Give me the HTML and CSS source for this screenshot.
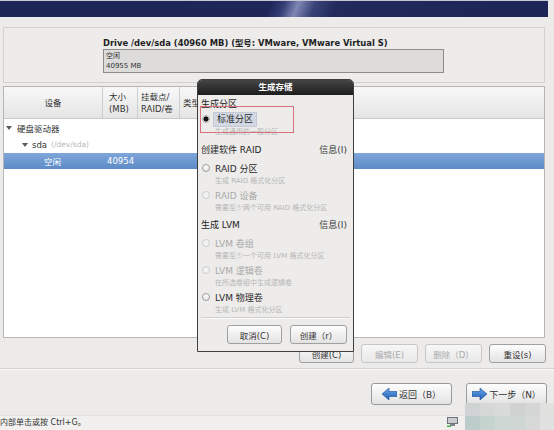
FILE: index.html
```html
<!DOCTYPE html>
<html>
<head>
<meta charset="utf-8">
<link rel="stylesheet" href="styles.css">
</head>
<body>
<div class="screen">
  <div class="banner"></div>
  <div class="main">
    <section class="drive-panel">
      <div class="drive-title">Drive /dev/sda (40960 MB) (型号: VMware, VMware Virtual S)</div>
      <div class="drive-bar"><span>空闲</span><span>40955 MB</span></div>
    </section>
    <section class="tree">
      <div class="tree-head">
        <div class="col c-dev">设备</div>
        <div class="col c-size"><span>大小</span><span>(MB)</span></div>
        <div class="col c-mount"><span>挂载点/</span><span>RAID/卷</span></div>
        <div class="col c-type">类型</div>
      </div>
      <div class="row lvl0"><span class="tri"></span>硬盘驱动器</div>
      <div class="row lvl1"><span class="tri"></span>sda <em class="path">(/dev/sda)</em></div>
      <div class="row sel"><span class="name">空闲</span><span>40954</span></div>
    </section>
    <div class="actions">
      <div class="btn w55">创建(C)</div>
      <div class="btn w57 disabled">编辑(E)</div>
      <div class="btn w57 disabled">删除（D）</div>
      <div class="btn w57">重设(s)</div>
    </div>
  </div>
  <div class="sep"></div>
  <div class="nav">
    <div class="btn nav-btn">
      <svg class="arrow" width="15" height="12" viewBox="0 0 15 12"><defs><linearGradient id="ab" x1="0" y1="0" x2="0" y2="1"><stop offset="0" stop-color="#6aa8ec"/><stop offset="1" stop-color="#1d5fb4"/></linearGradient></defs><polygon points="15,3.5 7,3.5 7,0 0,6 7,12 7,8.5 15,8.5" fill="url(#ab)" stroke="#1b4f95" stroke-width="0.6"/></svg>
      <span>返回（B）</span>
    </div>
    <div class="btn nav-btn">
      <svg class="arrow" width="15" height="12" viewBox="0 0 15 12"><defs><linearGradient id="an" x1="0" y1="0" x2="0" y2="1"><stop offset="0" stop-color="#6aa8ec"/><stop offset="1" stop-color="#1d5fb4"/></linearGradient></defs><polygon points="0,3.5 8,3.5 8,0 15,6 8,12 8,8.5 0,8.5" fill="url(#an)" stroke="#1b4f95" stroke-width="0.6"/></svg>
      <span>下一步（N）</span>
    </div>
  </div>
  <div class="status">内部单击或按 Ctrl+G。</div>

  <div class="dialog">
    <div class="dlg-title">生成存储</div>
    <div class="dlg-body">
      <div class="sec first">生成分区</div>
      <div class="opt"><span class="radio on"></span><span class="focus">标准分区</span></div>
      <div class="sub">生成通用的一般分区</div>
      <div class="sec gap3"><span>创建软件 RAID</span><span class="info">信息(I)</span></div>
      <div class="opt lead"><span class="radio"></span><span>RAID 分区</span></div>
      <div class="sub">生成 RAID 格式化分区</div>
      <div class="opt dis"><span class="radio"></span><span>RAID 设备</span></div>
      <div class="sub">需要至少两个可用 RAID 格式化分区</div>
      <div class="sec gap2"><span>生成 LVM</span><span class="info">信息(I)</span></div>
      <div class="opt lead dis"><span class="radio"></span><span>LVM 卷组</span></div>
      <div class="sub">需要至少一个可用 LVM 格式化分区</div>
      <div class="opt dis"><span class="radio"></span><span>LVM 逻辑卷</span></div>
      <div class="sub">在所选卷组中生成逻辑卷</div>
      <div class="opt"><span class="radio"></span><span>LVM 物理卷</span></div>
      <div class="sub">生成 LVM 格式化分区</div>
      <div class="dlg-sep"></div>
      <div class="dlg-actions">
        <div class="btn w55">取消(C)</div>
        <div class="btn w57">创建（r）</div>
      </div>
    </div>
    <div class="redbox"></div>
  </div>

  <svg class="tray" width="11" height="10" viewBox="0 0 11 10"><rect x="0.5" y="0.5" width="10" height="6" fill="#c9cdd2" stroke="#6d737a"/><rect x="3" y="7" width="5" height="2" fill="#7d838a"/><rect x="0" y="8.5" width="4" height="1.5" fill="#43b04a"/></svg>
  <div class="mosaic">
    <i style="background:#cfd3d3"></i><i style="background:#d5d8d7"></i><i style="background:#d9dbda"></i><i style="background:#cfd2d1"></i><i style="background:#d5d7d6"></i><i style="background:#e1e1e0"></i>
    <i style="background:#bccdc9"></i><i style="background:#c6d4d0"></i><i style="background:#cdd8d4"></i><i style="background:#d0d6d3"></i><i style="background:#d7d9d8"></i><i style="background:#e0e1e0"></i>
  </div>
</div>
</body>
</html>
```
FILE: styles.css
```css
* { box-sizing: border-box; margin: 0; padding: 0; }
html, body { width: 554px; height: 430px; overflow: hidden; }
body {
  background: #ecebea;
  font-family: "DejaVu Sans", "Noto Sans CJK SC", sans-serif;
  font-size: 9px;
  color: #2e2e2e;
}
.screen { position: relative; width: 554px; height: 430px; display: flex; flex-direction: column; }

.banner {
  height: 17px;
  margin-right: 6px;
  border-top: 1px solid #c5c7d2;
  background: linear-gradient(112deg, #1d2456 0%, #1f2759 49%, #353e76 51.5%, #7e87b2 54%, #3a4378 57%, #222a5c 61%, #1d2456 100%);
}

.main { padding: 10px 9px 0 3px; display: flex; flex-direction: column; }

.drive-panel {
  height: 56px;
  border: 1px solid #d3d2d0;
  background: #edeceb;
  padding: 9px 0 0 99px;
}
.drive-title { font-weight: bold; font-size: 8.4px; line-height: 12px; color: #1f1f1f; white-space: nowrap; }
.drive-bar {
  width: 341px; height: 24px;
  border: 1px solid #8c8c8c;
  background: #dddcdb;
  display: flex; flex-direction: column;
  padding: 1px 0 0 2px;
  font-size: 7px; line-height: 10px; color: #333;
}

.tree { margin-top: 3px; height: 252px; border: 1px solid #b5b5b5; background: #fff; }
.tree-head {
  display: flex; height: 32px;
  border-bottom: 1px solid #c9c9c9;
  background: linear-gradient(#f8f8f8, #e5e5e5);
  font-size: 8.5px; line-height: 12px; color: #333;
}
.col { display: flex; flex-direction: column; justify-content: center; border-right: 1px solid #cdcdcd; }
.c-dev { width: 99px; align-items: center; }
.c-size { width: 35px; padding-left: 6px; }
.c-mount { width: 42px; padding-left: 3px; }
.c-type { width: 40px; padding-left: 3px; border-right: none; }

.row { height: 17px; display: flex; align-items: center; font-size: 8.5px; color: #333; }
.lvl0 { padding-left: 2px; }
.lvl1 { padding-left: 18px; }
.tri {
  width: 0; height: 0;
  border-left: 3.5px solid transparent; border-right: 3.5px solid transparent;
  border-top: 4px solid #5a5a5a;
  margin-right: 5px;
}
.lvl1 .tri { margin-right: 4px; }
.path { font-style: normal; color: #b8b8b8; font-size: 7.5px; margin-left: 4px; }
.sel {
  height: 16px;
  padding-left: 40px;
  background: linear-gradient(#7ea6d9, #5d8bc7);
  color: #fff;
}
.sel .name { width: 63px; }

.btn {
  display: flex; align-items: center; justify-content: center; gap: 2px;
  height: 19px;
  border: 1px solid #a0a0a0;
  border-radius: 3px;
  background: linear-gradient(#fdfdfd, #e3e3e3);
  font-size: 8.5px; color: #333;
  white-space: nowrap;
}
.btn.disabled { color: #acacac; border-color: #c6c6c6; background: linear-gradient(#f7f7f7, #e9e9e9); }
.w55 { width: 55px; }
.w57 { width: 57px; }

.actions { display: flex; justify-content: flex-end; gap: 7px; margin-top: 6px; margin-right: -1px; }

.sep { margin-top: 5px; height: 2px; border-top: 1px solid #d3d2d1; border-bottom: 1px solid #f8f8f8; }

.nav { display: flex; justify-content: flex-end; gap: 14px; margin-top: 13px; padding-right: 7px; }
.nav-btn { width: 81px; height: 22px; font-size: 9px; border-color: #9a9a9a; }
.arrow { flex: none; }

.status {
  margin-top: auto;
  height: 15px;
  background: #f1f0ef;
  border-top: 1px solid #e2e1e0;
  font-size: 8px; line-height: 14px; color: #333;
  white-space: nowrap;
}

.dialog {
  position: absolute; left: 197px; top: 79px;
  width: 157px; height: 273px;
  border: 1px solid #3e3e3e;
  border-radius: 5px 5px 0 0;
  background: #edecea;
  display: flex; flex-direction: column;
}
.dlg-title {
  height: 15px;
  background: linear-gradient(#454545, #1d1d1d);
  border-radius: 4px 4px 0 0;
  color: #fff; font-weight: bold; font-size: 8.5px;
  line-height: 15px; text-align: center;
}
.dlg-body { display: flex; flex-direction: column; padding: 0 6px 0 3px; font-size: 9px; color: #2a2a2a; }
.sec { display: flex; justify-content: space-between; align-items: center; height: 14px; color: #1e1e1e; }
.sec.first { height: 17px; }
.gap3 { margin-top: 3px; }
.gap2 { margin-top: 2px; }
.info { color: #3a3a3a; }
.opt { display: flex; align-items: center; height: 14px; padding-left: 1px; gap: 5px; }
.opt.lead { margin-top: 5px; }
.opt.dis { color: #a9a9a9; }
.radio {
  flex: none; width: 8px; height: 8px; border-radius: 50%;
  border: 1px solid #9c9c9c;
  background: linear-gradient(#ffffff, #e6e6e6);
}
.opt.dis .radio { border-color: #cdcdcd; background: #f2f2f2; }
.radio.on { border-color: #b0b0b0; background: radial-gradient(circle, #111 0 2.3px, transparent 2.9px), #f0f0f0; }
.focus {
  margin-left: -2px; padding: 0 3px;
  height: 15px; line-height: 13px;
  background: #d3d9e3; border: 1px solid #c3cad6;
}
.sub { height: 13px; line-height: 13px; padding-left: 14px; font-size: 7px; color: #b7b7b7; white-space: nowrap; }
.dlg-sep { height: 2px; border-top: 1px solid #cfcfcf; border-bottom: 1px solid #fafafa; margin: 0 -3px 0 0; }
.dlg-actions { display: flex; justify-content: flex-end; gap: 8px; margin-top: 6px; }

.redbox {
  position: absolute; left: 2px; top: 26px;
  width: 94px; height: 27px;
  border: 1px solid #d6727d;
}

.tray { position: absolute; left: 447px; top: 417px; }
.mosaic {
  position: absolute; left: 465px; top: 403px;
  width: 89px; height: 27px;
  display: grid; grid-template-columns: repeat(6, 15px); grid-template-rows: 13px 14px;
}
.mosaic i { display: block; }
```
